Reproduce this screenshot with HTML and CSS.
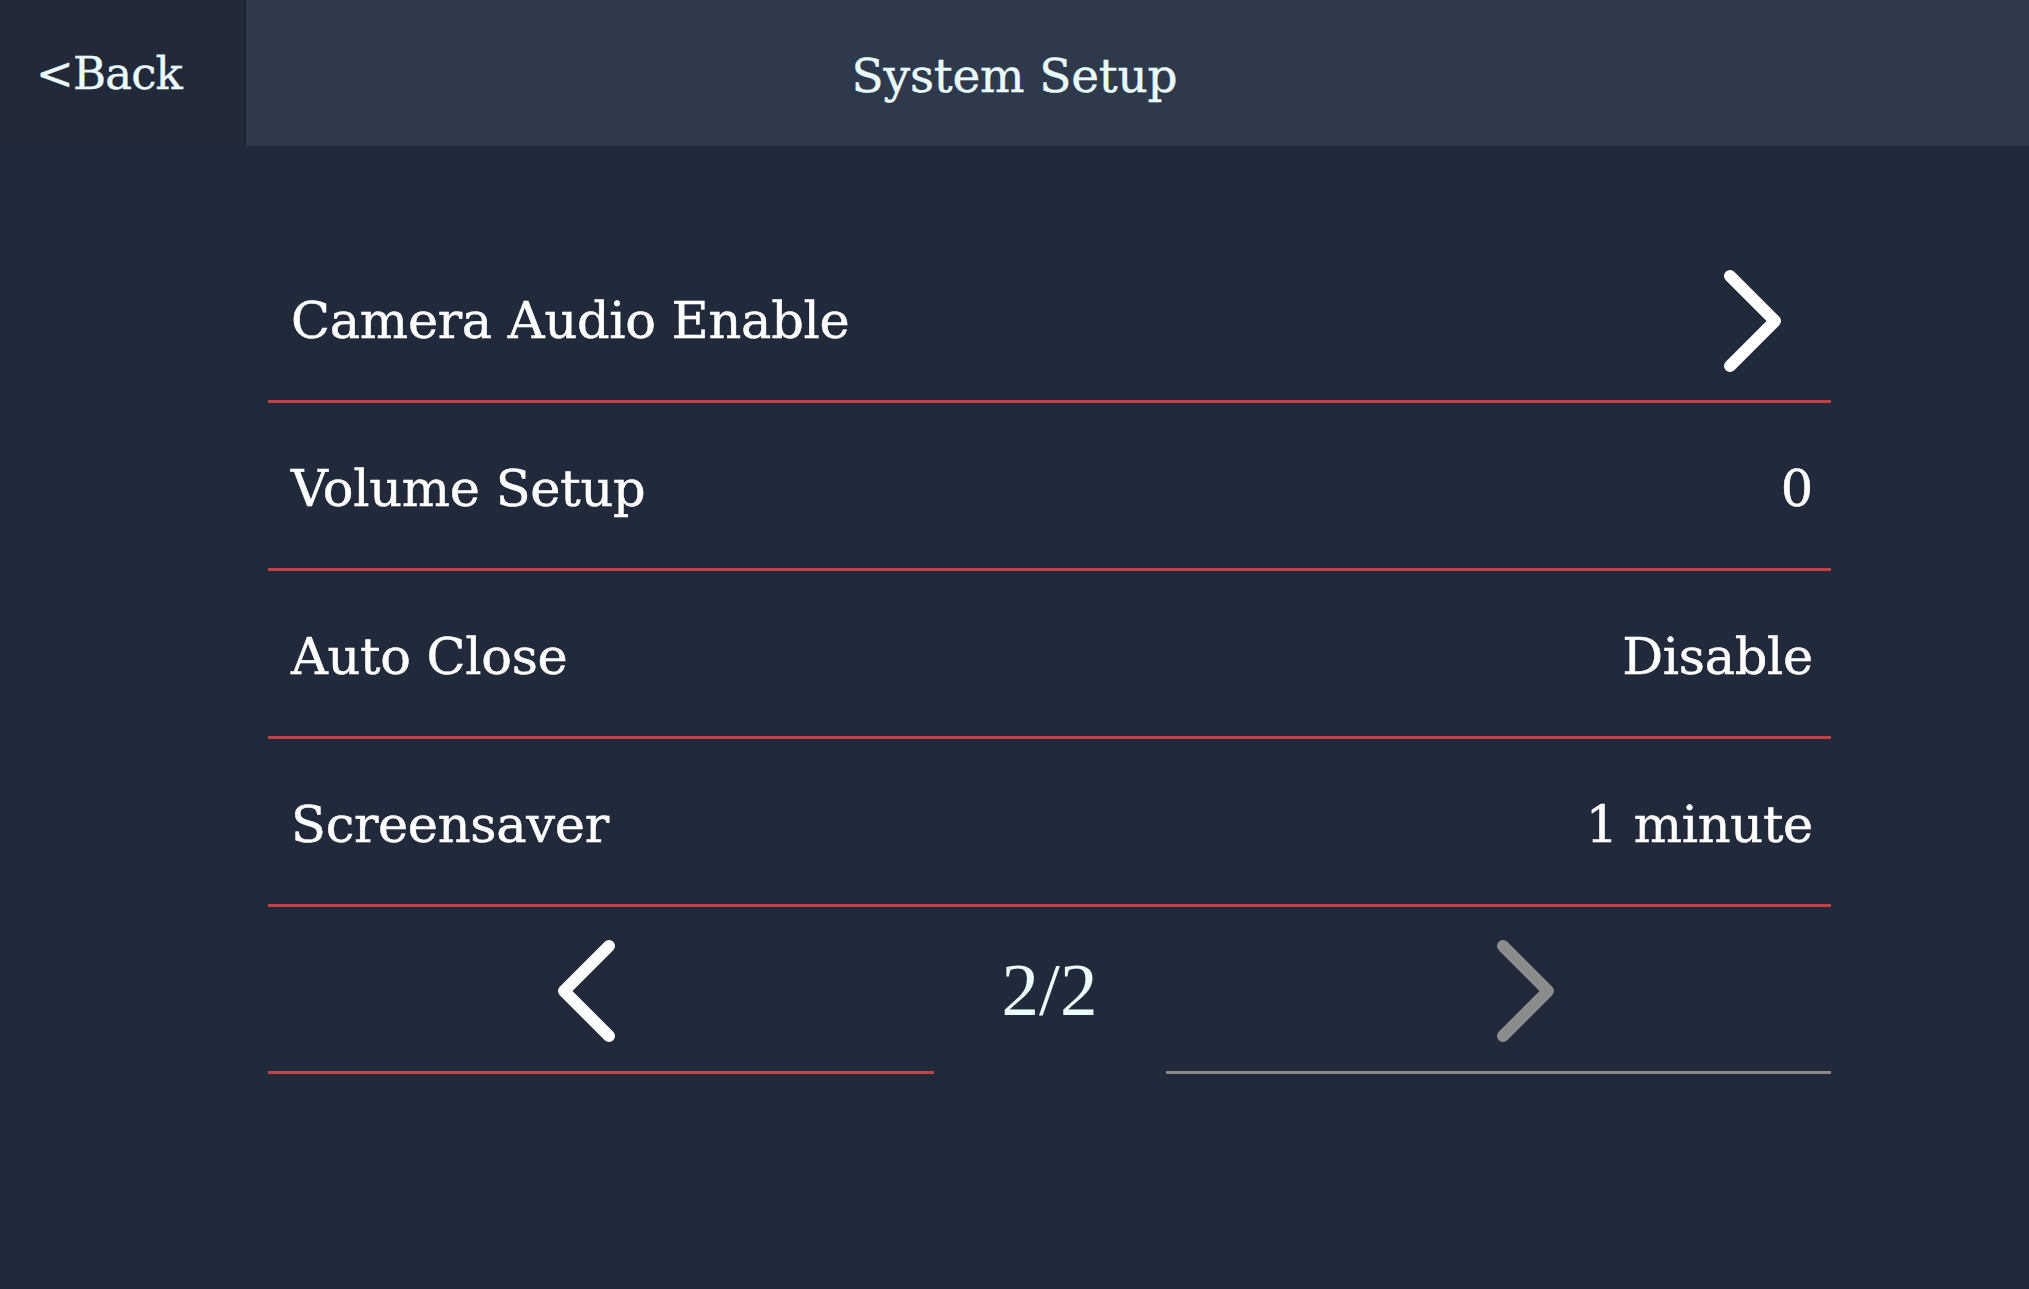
FILE: index.html
```html
<!DOCTYPE html>
<html>
<head>
  <meta charset="UTF-8">
  <title>System Setup</title>
  <link rel="stylesheet" href="styles.css">
</head>
<body>
  <header class="topbar">
    <a href="#" class="back">&lt;Back</a>
    <h1 class="title">System Setup</h1>
  </header>
  <main class="settings">
    <ul class="setting-list">
      <li class="setting-row">
        <span class="label">Camera Audio Enable</span>
        <svg class="chevron" viewBox="0 0 60 104">
          <path d="M7 7 L52 52 L7 97"/>
        </svg>
      </li>
      <li class="setting-row">
        <span class="label">Volume Setup</span>
        <span class="value">0</span>
      </li>
      <li class="setting-row">
        <span class="label">Auto Close</span>
        <span class="value">Disable</span>
      </li>
      <li class="setting-row">
        <span class="label">Screensaver</span>
        <span class="value">1 minute</span>
      </li>
    </ul>
    <div class="pager">
      <div class="pager-btn prev">
        <svg class="chevron" viewBox="0 0 60 104">
          <path d="M53 7 L8 52 L53 97"/>
        </svg>
      </div>
      <div class="pager-count">2/2</div>
      <div class="pager-btn next disabled">
        <svg class="chevron" viewBox="0 0 60 104">
          <path d="M7 7 L52 52 L7 97"/>
        </svg>
      </div>
    </div>
  </main>
</body>
</html>
```
FILE: styles.css
```css
* {
  margin: 0;
  padding: 0;
  box-sizing: border-box;
}

body {
  background: #212a3a;
  color: #fff;
  font-family: "DejaVu Serif", serif;
  width: 2029px;
  height: 1289px;
  overflow: hidden;
}

.topbar {
  display: grid;
  grid-template-columns: 246px 1fr 246px;
  height: 146px;
  background: #2e394c;
}

.back {
  display: flex;
  align-items: center;
  padding-left: 36px;
  background: #222a3a;
  border-right: 2px solid #1b2230;
  color: #eafbff;
  font-size: 45px;
  letter-spacing: -0.8px;
  text-decoration: none;
  -webkit-text-stroke: 0.4px #eafbff;
}

.title {
  display: flex;
  align-items: center;
  justify-content: center;
  padding-top: 4px;
  color: #eafbff;
  font-size: 47px;
  font-weight: normal;
  letter-spacing: -0.2px;
  -webkit-text-stroke: 0.4px #eafbff;
}

.settings {
  width: 1563px;
  margin: 89px 0 0 268px;
}

.setting-list {
  list-style: none;
}

.setting-row {
  display: flex;
  align-items: center;
  justify-content: space-between;
  height: 168px;
  padding: 6px 18px 0 23px;
  border-bottom: 3px solid #be4447;
  font-size: 51px;
  letter-spacing: -0.3px;
  -webkit-text-stroke: 0.5px #fff;
}

.setting-row .chevron {
  margin-right: 30px;
}

.chevron {
  width: 60px;
  height: 104px;
  fill: none;
  stroke: #fff;
  stroke-width: 12;
  stroke-linecap: round;
  stroke-linejoin: round;
}

.pager {
  display: grid;
  grid-template-columns: 1fr 232px 1fr;
  align-items: center;
  height: 167px;
}

.pager-btn {
  display: flex;
  justify-content: center;
  align-items: center;
  height: 100%;
  padding-top: 4px;
  border-bottom: 3px solid #be4447;
}

.pager-btn.prev {
  padding-right: 30px;
}

.pager-btn.next {
  padding-left: 56px;
}

.pager-btn.disabled {
  border-bottom-color: #8a8a8a;
}

.pager-btn.disabled .chevron {
  stroke: #8c8c8c;
}

.pager-count {
  text-align: center;
  color: #eafbff;
  font-family: "Liberation Serif", serif;
  font-size: 75px;
  padding-bottom: 2px;
}
```
